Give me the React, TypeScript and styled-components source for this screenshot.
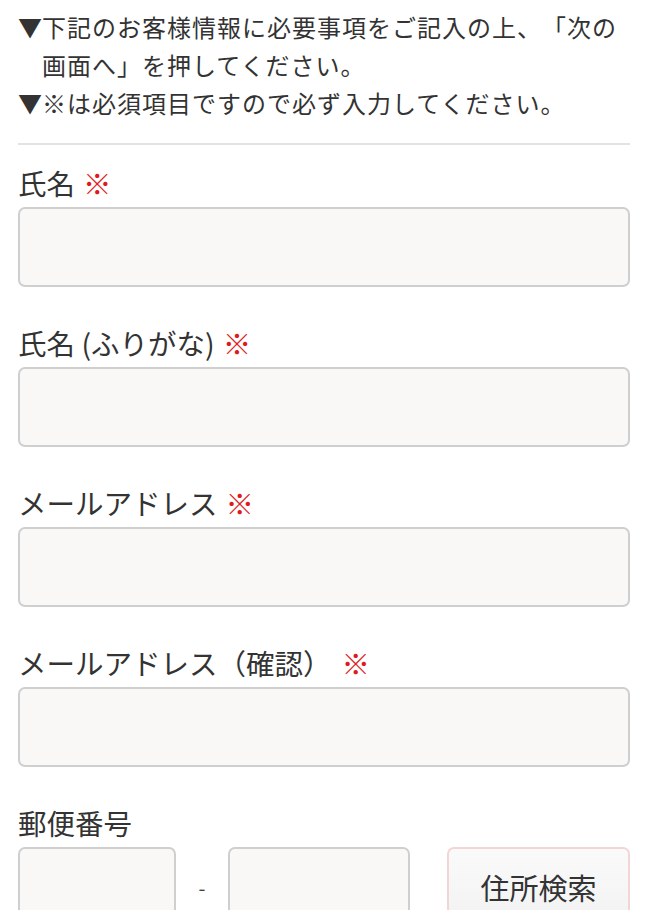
import styled, { createGlobalStyle } from "styled-components";

const GlobalStyle = createGlobalStyle`
  body {
    margin: 0;
    background: #fff;
    font-family: "Noto Sans CJK JP", "Noto Sans", sans-serif;
    color: #333;
    text-spacing-trim: space-all;
  }
`;

type Field = { label: string; required?: boolean; spaced?: boolean };

const fields: Field[] = [
  { label: "氏名", required: true },
  { label: "氏名 (ふりがな)", required: true },
  { label: "メールアドレス", required: true },
  { label: "メールアドレス（確認）", required: true, spaced: true },
];

export default function App() {
  return (
    <>
      <GlobalStyle />
      <Page>
        <Notes>
          <Note>
            <Mark>▼</Mark>下記のお客様情報に必要事項をご記入の上、「次の画面へ」を押してください。
          </Note>
          <Note>
            <Mark>▼</Mark>※は必須項目ですので必ず入力してください。
          </Note>
        </Notes>
        <Divider />
        {fields.map((f) => (
          <FieldBlock key={f.label}>
            <Label>
              {f.label}
              {f.required && <Required $spaced={f.spaced}>※</Required>}
            </Label>
            <TextInput type="text" />
          </FieldBlock>
        ))}
        <FieldBlock>
          <Label>郵便番号</Label>
          <PostalRow>
            <PostalInput type="text" />
            <Dash>-</Dash>
            <PostalInput type="text" />
            <SearchButton type="button">住所検索</SearchButton>
          </PostalRow>
        </FieldBlock>
      </Page>
    </>
  );
}

const Page = styled.div`
  padding: 8px 18px 40px;
`;

const Notes = styled.div`
  font-size: 24px;
  line-height: 38px;
  letter-spacing: 1px;
`;

const Note = styled.p`
  margin: 0;
  padding-left: 24px;
  text-indent: -24px;
`;

const Mark = styled.span`
  display: inline-block;
  width: 24px;
  text-indent: 0;
`;

const Divider = styled.hr`
  border: none;
  border-top: 2px solid #e2e2e2;
  margin: 21px 0 20px;
`;

const FieldBlock = styled.div`
  display: flex;
  flex-direction: column;
  gap: 6px;
  margin-bottom: 38px;
`;

const Label = styled.div`
  font-size: 28.5px;
  line-height: 36px;
  color: #333;
`;

const Required = styled.span<{ $spaced?: boolean }>`
  color: #e01a1a;
  margin-left: ${(p) => (p.$spaced ? "10px" : "8px")};
`;

const TextInput = styled.input`
  box-sizing: border-box;
  width: 100%;
  height: 80px;
  border: 2px solid #cfcfcf;
  border-radius: 7px;
  background: #f9f8f7;
  outline: none;
  font-size: 24px;
  padding: 0 14px;
`;

const PostalRow = styled.div`
  display: grid;
  grid-template-columns: 158px 52px 182px 1fr;
  align-items: center;
`;

const PostalInput = styled(TextInput)`
  &:first-child {
    width: 158px;
  }
`;

const Dash = styled.span`
  text-align: center;
  font-size: 20px;
  color: #444;
`;

const SearchButton = styled.button`
  justify-self: end;
  width: 183px;
  height: 80px;
  border: 2px solid #f2d6d6;
  border-radius: 7px;
  background: linear-gradient(#fafafa, #f2f2f2);
  font-family: "Noto Sans CJK JP", sans-serif;
  font-size: 29px;
  color: #333;
`;
